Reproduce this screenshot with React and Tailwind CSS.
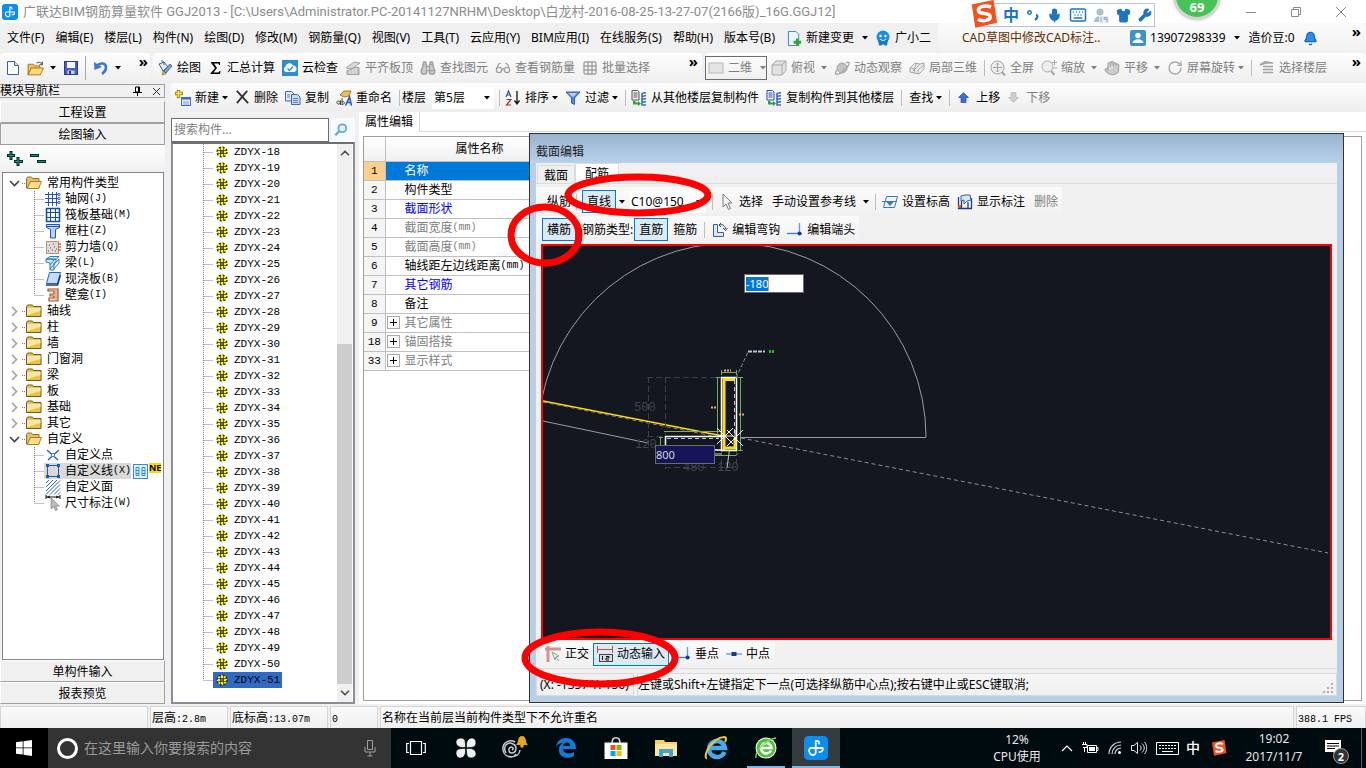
import React from 'react';
import {
    Bell, Binoculars, ChevronDown, ChevronUp, Glasses, Grid3x3, Hand, Keyboard, Mic,
    MousePointer2, RotateCw, Shirt, Wrench,
} from 'lucide-react';

const MONO = "font-['Liberation_Mono','Noto_Sans_CJK_SC',monospace]";

/* ---------- small building blocks ---------- */

const Svg = ({ size = 16, children, className = '' }) => (
    <svg width={size} height={size} viewBox="0 0 16 16" fill="none" className={`shrink-0 ${className}`} aria-hidden="true">
        {children}
    </svg>
);

const Caret = ({ className = '' }) => (
    <svg width="6" height="4" viewBox="0 0 6 4" className={`shrink-0 ${className}`} aria-hidden="true">
        <path d="M0 0h6L3 3.5z" fill="currentColor" />
    </svg>
);

const Sep = ({ className = '' }) => <span className={`h-4 w-px shrink-0 bg-[#bdbdbd] ${className}`} />;

const More = () => <span className="block text-[15px] leading-3 font-bold text-black">»</span>;

const Tool = ({ icon, label, muted, arrow, className = '' }) => (
    <button className={`flex shrink-0 items-center gap-1 whitespace-nowrap ${muted ? 'text-[#808080]' : 'text-black'} ${className}`}>
        {icon}
        {label}
        {arrow && <Caret className="-ml-px" />}
    </button>
);

const WideArrowTool = ({ icon, label }) => (
    <button className="flex shrink-0 items-center gap-1 whitespace-nowrap text-[#808080]">
        {icon}
        {label}
        <Caret className="ml-0.5" />
    </button>
);

/* ---------- icons ---------- */

const AppLogo = ({ size = 16 }) => (
    <Svg size={size}>
        <rect width="16" height="16" rx="3" fill="#0a8ff0" />
        <path d="M7.800 3.200v7.600c0 1.800-1.400 2.300-2.800 1.600C3.200 11.400 2.800 9.200 4.200 8h8.200c.5 1.600-.6 2.800-2.200 2.700M7.800 3.300c1.500-.4 2.500.4 2.200 1.700" stroke="#fff" strokeWidth="1.200" strokeLinecap="round" />
    </Svg>
);

const NewFile = () => (
    <Svg><path d="M2.500 1.500h7l4 4v9h-11z" fill="#fff" stroke="#3b5f94" /><path d="M9.500 1.500v4h4" fill="#dbe7f7" stroke="#3b5f94" /></Svg>
);
const OpenFile = () => (
    <Svg size={17}>
        <path d="M1 4h5l1 1.500h5V8H4L1 14z" fill="#f0c35a" stroke="#9a6a1c" strokeWidth=".8" />
        <path d="M1 14l3-6.500h11.500L12.500 14z" fill="#ffd978" stroke="#9a6a1c" strokeWidth=".8" />
        <path d="M9 3c2-1.500 4-1 5 1M14.500 1.500V4.500h-3" stroke="#55606e" />
    </Svg>
);
const SaveFile = () => (
    <Svg><rect x="1.500" y="1.500" width="13" height="13" fill="#4a5fc4" stroke="#2a3a90" /><path d="M4 2h8v6H4z" fill="#f4f6ff" /><path d="M4.500 10.500h7V14h-7z" fill="#c9cfe9" /><path d="M6 11h2v3H6z" fill="#2a3a90" /></Svg>
);
const Undo = () => (
    <Svg><path d="M4 6c3-4 9-3 9 1.500 0 3-2 5-4 6.500" stroke="#3d74d0" strokeWidth="2.600" /><path d="M1 2l.5 8L9 7z" fill="#3d74d0" /></Svg>
);
const Paint = () => (
    <Svg size={16}>
        <path d="M2 4l5-2 4 5-5 4z" fill="#dfeaf7" stroke="#3d5f90" /><path d="M4 1c2-1 3 1 3 4" stroke="#3d5f90" />
        <path d="M7 11l6-7 2 2-6 7z" fill="#7ea4d8" stroke="#34558a" strokeWidth=".8" /><path d="M6 11l3 3-4 1z" fill="#eab23b" stroke="#8a6420" strokeWidth=".6" />
    </Svg>
);
const Sigma = () => <Svg className="-mr-px"><path d="M3 2h9v3h-1l-.5-1.500H6L9 8l-3.500 4.500h5L11.500 11h1l-.5 3H2.500v-.8L7 8.200 3 2.800z" fill="#000" /></Svg>;
const CloudCheck = () => (
    <Svg><rect width="16" height="16" fill="#2a8fd0" /><path d="M4 12a3 3 0 0 1-.5-5.500A4 4 0 0 1 11 5.500 3.300 3.300 0 0 1 12 12z" fill="#fff" /><path d="M5.500 8.500l2 2 3.500-4" stroke="#2a8fd0" strokeWidth="1.400" /></Svg>
);
const AlignSlab = () => <Svg><path d="M1 8l8-6 6 1-8 6z" fill="#d8d8d8" stroke="#a5a5a5" /><path d="M2 14.500v-4h3v-1.500h3v-1.500h6v7z" fill="#c4c4c4" stroke="#a0a0a0" /><path d="M5 14v-4M8 14V9M11 14V8" stroke="#eee" /></Svg>;
const Box2D = () => <Svg><rect x="1" y="3" width="14" height="10" fill="#e4e4e4" stroke="#b8b8b8" /></Svg>;
const Cube = () => <Svg><path d="M1 5l4-4h10v9.500L11 15H1zM1 5h10v10M11 5l4-4" fill="#e2e2e2" stroke="#a8a8a8" /></Svg>;
const Planet = () => <Svg><circle cx="8" cy="8" r="5" fill="#c4c4c4" stroke="#a4a4a4" /><path d="M12 3c3-2 4 0 2 3-3 4-8 8-11 8.500-2 .2-2-2 0-4.500" stroke="#ababab" strokeWidth="1.400" /></Svg>;
const Cubes = () => <Svg><path d="M1 8l5-5 5 1 4-1v6l-5 5-5-1-4-1zM1 8l5 1 5-5M6 9l-1 4M8 3l-4 8M15 5l-6 5v4" fill="#eaeaea" stroke="#a8a8a8" /></Svg>;
const FullView = () => <Svg><circle cx="7.500" cy="7.500" r="6.500" fill="#efefef" stroke="#a4a4a4" /><path d="M12 12l3 3.500" stroke="#a4a4a4" strokeWidth="2" /><path d="M7.500 3v9M3 7.500h9M6 4.500l1.500-1.500L9 4.500M6 10.500l1.500 1.500L9 10.500" stroke="#a4a4a4" /></Svg>;
const ZoomView = () => <Svg><circle cx="6.500" cy="6.500" r="5.500" fill="#eee" stroke="#aaa" /><path d="M10 11l3.500 4" stroke="#aaa" strokeWidth="2" /><path d="M13.500 0v5M11 2.500h5M12 8h4" stroke="#aaa" /></Svg>;
const Floors = () => <Svg><path d="M1 5l5-3 8 1H7zM4 6.500h10M4 9.500h10M4 12.500h10" stroke="#a4a4a4" strokeWidth="1.700" /></Svg>;
const NewItem = () => (
    <Svg><path d="M3.500 0v8M0 3.500h8" stroke="#b08a10" strokeWidth="3.400" /><path d="M3.500 1v6M1 3.500h6" stroke="#ffe14a" strokeWidth="1.600" /><rect x="6.500" y="7.500" width="9" height="8" fill="#e8f0ff" stroke="#4a6fb5" /><path d="M6 8.500h10" stroke="#3c69c4" strokeWidth="2" /><path d="M8 12h6M8 14h6" stroke="#7a9bd8" /></Svg>
);
const Cross = () => <Svg size={15}><path d="M2 1l12 13M13 1L2 14" stroke="#333" strokeWidth="2" /></Svg>;
const Copy = () => (
    <Svg><path d="M.5 1.500h6l2.500 2.500v7H.5z" fill="#dfe9fa" stroke="#3f68b3" /><path d="M6.500 4.500h6l2.500 2.500v7.500H6.500z" fill="#c9dbf7" stroke="#3f68b3" /><path d="M2 5h3M2 7h3M8 8.500h5M8 10.500h5M8 12.500h5" stroke="#3f68b3" strokeWidth=".8" /></Svg>
);
const Rename = () => (
    <Svg>
        <path d="M4 5l4-4h7l-2 5-5 1z" fill="#eec04c" stroke="#8a6414" strokeWidth=".8" />
        <circle cx="2.500" cy="12.500" r="1.600" stroke="#444" /><path d="M4.500 10.500v4.500M6 8v7M6 12c3-2 3 3 0 2.500" stroke="#444" />
        <path d="M9.500 15.500L13.500 7l2 8.500M11 12.500h4" stroke="#2a58b8" strokeWidth="1.600" />
    </Svg>
);
const SortAZ = () => (
    <Svg>
        <path d="M1 7l2.500-6L6 7M2 5h3" stroke="#2b50b0" strokeWidth="1.200" /><path d="M1.500 9.500H6L1.500 15H6" stroke="#a02c2c" strokeWidth="1.200" />
        <path d="M12 1v12M9.500 10.500l2.500 3.500 2.500-3.500" stroke="#111" strokeWidth="1.300" />
    </Svg>
);
const Funnel = () => <Svg><path d="M1 2h14l-5.500 6v6.500l-3-1.500V8z" fill="#4f8ae0" stroke="#2d5fb5" /><path d="M3 3h9L8 7z" fill="#b7d3fa" /></Svg>;
const CopyFloors = ({ doc = '#555' }) => (
    <Svg>
        <path d="M1 .5h5.500L8 2v8H1z" fill="#eef2fa" stroke={doc} /><path d="M2.500 3h4M2.500 5h4M2.500 7h4" stroke={doc} />
        <path d="M11 3.500l4-1M11 6.500l4-1M11 9.500l4-1M11 12.500l4-1M11 3v12h4" stroke="#3a70c8" strokeWidth="1.600" />
        <path d="M2 11h2.500v1.500H7L7 11l3 2.500-3 2.500v-1.500H2z" fill="#2aa33a" />
    </Svg>
);
const UpArrow = ({ color = '#3a6fd8', edge = '#2450a8', down }) => (
    <Svg size={13} className={down ? 'rotate-180' : ''}><path d="M8 2l6 6h-3v6H5V8H2z" fill={color} stroke={edge} /></Svg>
);
const SogouS = ({ size = 16 }) => (
    <Svg size={size}>
        <path d="M1 2.500L13.500 0 15.500 13 3 15.800z" fill="#f4511e" />
        <path d="M12 4C8 2.500 4 4 5 6.500c1 2 6 .5 6.500 2.800.4 2.400-4 3.300-7 1.700" stroke="#fff" strokeWidth="2" />
    </Svg>
);

const Folder = ({ open }) => (
    <svg width="16" height="14" viewBox="0 0 16 14" className="shrink-0" aria-hidden="true">
        {open ? (
            <>
                <path d="M.5 2.500L1.500 1h4l1 1.500H13V12H.5z" fill="#e8bf5a" stroke="#8b7437" />
                <path d="M1 12.500L4.500 5.500h11L12.500 12.500z" fill="#ffdf8c" stroke="#a9812c" />
            </>
        ) : (
            <>
                <path d="M.5 2.500L1.500 1h5l1 1.500H15V12.500H.5z" fill="#f0bf4c" stroke="#6f5a20" />
                <path d="M1 4h13.500v3L1 11z" fill="#ffe7a4" />
            </>
        )}
    </svg>
);

/* dotted connector of a tree row */
const Branch = ({ last, width = 12 }) => (
    <svg width={width} height="16" className="shrink-0" aria-hidden="true">
        <path d={`M.5 0V${last ? 8 : 16}M.5 8.5H${width}`} stroke="#808080" strokeDasharray="1 1" fill="none" />
    </svg>
);

const ChildIcon = ({ kind }) => {
    switch (kind) {
        case 'grid':
            return <Svg><path d="M3.500 1v14M7.500 1v14M11.500 1v14M0 3.500h14M0 7.500h14M0 11.500h14" stroke="#2a52b8" /><path d="M13 2.500h2v2h-2zM13 6.500h2v2h-2zM13 10.500h2v2h-2z" stroke="#2a52b8" fill="#fff" strokeWidth=".8" /></Svg>;
        case 'raft':
            return <Svg><rect x="1.500" y="1.500" width="13" height="13" stroke="#1b4e94" strokeWidth="1.500" fill="#eaf2ff" /><rect x="5.500" y="5.500" width="5" height="5" fill="#fff" /><path d="M5.500 2v12M10.500 2v12M2 5.500h12M2 10.500h12" stroke="#1b4e94" /></Svg>;
        case 'column':
            return <Svg><path d="M1.500 1.500h13v3l-4 2v8.500h-5V6.500l-4-2z" fill="#b9d4fb" stroke="#1f57b8" /><path d="M1.500 3.500h13" stroke="#1f57b8" /></Svg>;
        case 'wall':
            return <Svg><rect x="1.500" y="2.500" width="12" height="12" fill="#dcdcdc" stroke="#c98a66" /><path d="M13 5h3M13 8h3M13 11h3" stroke="#e0622a" strokeWidth="1.400" /><path d="M3 12h1M5 9h1M7 11h1M9 8h1M10 12h1M4 6h1M8 5h1M11 10h1" stroke="#555" /></Svg>;
        case 'beam':
            return <Svg><path d="M1 4l4-2.500h9l-3 3zM1 4h10v3L9 8v7H5V8L1 7z" fill="#cfe6fb" stroke="#2a7fc4" /><path d="M5 14l9-10v4L9 14M5 10l4-5" stroke="#2a7fc4" /></Svg>;
        case 'slab':
            return <Svg><path d="M4.500 1.500h11l-3 11H1.500z" fill="#c5ddfb" stroke="#2a62c0" /><path d="M1 14h11.500l3-10" stroke="#143f8c" strokeWidth="1.600" /></Svg>;
        case 'niche':
            return <Svg><path d="M3 2h10v12H4v-3h5V9H5V7h4V4H3z" fill="#f7dcc6" stroke="#a2501c" strokeWidth="1.200" /><path d="M11 3v10" stroke="#d98750" /></Svg>;
        case 'point':
            return <Svg><path d="M2 3l11 10M14 3L3 13" stroke="#1f57b8" strokeWidth="1.200" /><rect x="6.500" y="6.500" width="3" height="3" fill="#fff" stroke="#2a8fe0" /></Svg>;
        case 'line':
            return <Svg><rect x="2.500" y="2.500" width="11" height="11" stroke="#1f57b8" /><path d="M1 1h3v3H1zM12 1h3v3h-3zM1 12h3v3H1zM12 12h3v3h-3z" fill="#1f57b8" /></Svg>;
        case 'face':
            return <Svg><path d="M1 4l3-3M1 8l7-7M1 12L12 1M1 15.500L15 1.500M5 15.500L15 5.500M9 15.500l6-6M13 15.500l2-2" stroke="#2a62c0" /></Svg>;
        default:
            return <Svg><path d="M1 0v4M15 0v4M1 2h14M5 1L2.500 2 5 3M11 1l2.500 1L11 3" stroke="#111" /><path d="M6 3v11l3-2.500 1.500 4 2-1-2-3.500h4z" fill="#bbb" stroke="#888" strokeWidth=".8" /></Svg>;
    }
};

const Gear = () => (
    <svg width="12" height="12" viewBox="0 0 12 12" className="shrink-0" aria-hidden="true">
        <circle cx="6" cy="6" r="5" fill="#f6f01c" stroke="#1c1c00" strokeWidth="1.200" strokeDasharray="2.200 1.700" />
        <path d="M4.500 1.500v9M7.500 1.500v9M1.500 4.500h9M1.500 7.500h9" stroke="#3a3800" strokeWidth=".7" />
        <rect x="5" y="5" width="2" height="2" fill="#fff" stroke="#222" strokeWidth=".8" />
    </svg>
);

/* ---------- data ---------- */

const MENUS = [
    '文件(F)', '编辑(E)', '楼层(L)', '构件(N)', '绘图(D)', '修改(M)', '钢筋量(Q)', '视图(V)',
    '工具(T)', '云应用(Y)', 'BIM应用(I)', '在线服务(S)', '帮助(H)', '版本号(B)',
];

const COMMON_TYPES = [
    { label: '轴网', hotkey: '(J)', kind: 'grid' },
    { label: '筏板基础', hotkey: '(M)', kind: 'raft' },
    { label: '框柱', hotkey: '(Z)', kind: 'column' },
    { label: '剪力墙', hotkey: '(Q)', kind: 'wall' },
    { label: '梁', hotkey: '(L)', kind: 'beam' },
    { label: '现浇板', hotkey: '(B)', kind: 'slab' },
    { label: '壁龛', hotkey: '(I)', kind: 'niche' },
];

const CLOSED_FOLDERS = ['轴线', '柱', '墙', '门窗洞', '梁', '板', '基础', '其它'];

const CUSTOM_TYPES = [
    { label: '自定义点', kind: 'point' },
    { label: '自定义线', hotkey: '(X)', kind: 'line', selected: true },
    { label: '自定义面', kind: 'face' },
    { label: '尺寸标注', hotkey: '(W)', kind: 'dim' },
];

const COMPONENTS = Array.from({ length: 34 }, (_, i) => `ZDYX-${18 + i}`);

const PROPS = [
    { no: 1, name: '名称', selected: true },
    { no: 2, name: '构件类型' },
    { no: 3, name: '截面形状', tone: 'text-[#0000ff]' },
    { no: 4, name: '截面宽度', unit: '(mm)', tone: 'text-[#808080]' },
    { no: 5, name: '截面高度', unit: '(mm)', tone: 'text-[#808080]' },
    { no: 6, name: '轴线距左边线距离', unit: '(mm)' },
    { no: 7, name: '其它钢筋', tone: 'text-[#0000ff]' },
    { no: 8, name: '备注' },
    { no: 9, name: '其它属性', tone: 'text-[#808080]', group: true },
    { no: 18, name: '锚固搭接', tone: 'text-[#808080]', group: true },
    { no: 33, name: '显示样式', tone: 'text-[#808080]', group: true },
];

/* ---------- top bars ---------- */

const TitleBar = () => (
    <header className="relative flex h-[23px] items-center bg-white pr-5 pl-0.5">
        <AppLogo />
        <h1 className="ml-[5px] flex-1 font-['Roboto','Noto_Sans_CJK_SC',sans-serif] text-[13px] whitespace-nowrap text-[#8c8c8c]">
            广联达BIM钢筋算量软件 GGJ2013 - [C:\Users\Administrator.PC-20141127NRHM\Desktop\白龙村-2016-08-25-13-27-07(2166版)_16G.GGJ12]
        </h1>
        <div className="flex items-center gap-[35px] text-[#8a8a8a]">
            <button aria-label="最小化"><svg width="10" height="10"><path d="M0 5.500h10" stroke="currentColor" /></svg></button>
            <button aria-label="还原"><svg width="10" height="10" fill="none"><path d="M.5 2.500h7v7h-7zM2.500 2V.5h7v7H8" stroke="currentColor" /></svg></button>
            <button aria-label="关闭"><svg width="10" height="10"><path d="M0 0l10 10M10 0L0 10" stroke="currentColor" /></svg></button>
        </div>
        {/* input method bar and speed ball float over the window */}
        <div className="absolute top-[3px] right-[211px] z-20 flex h-6 w-[176px] items-center justify-end gap-[7px] border border-[#b4c3d6] bg-white pr-0.5 text-[#1c74c4]">
            <span className="absolute -top-1 -left-2.5"><SogouS size={28} /></span>
            <span className="text-base leading-5 font-bold">中</span>
            <svg width="14" height="14" fill="none"><circle cx="3.500" cy="4.500" r="1.700" stroke="currentColor" strokeWidth="1.500" /><path d="M10 7c2 0 2 3-1 5" stroke="currentColor" strokeWidth="2.200" /></svg>
            <Mic size={15} strokeWidth={2.500} fill="currentColor" />
            <Keyboard size={18} />
            <svg width="15" height="15"><circle cx="6" cy="4" r="3.500" fill="#a9bdd3" /><path d="M0 14c0-8 12-8 12 0z" fill="#a9bdd3" /><rect x="5" y="8" width="10" height="7" fill="#e9eef4" /><path d="M7 9v5M10 9.500h3v5M10 9.500v2h3" stroke="#8aa2bd" fill="none" /></svg>
            <Shirt size={15} fill="currentColor" />
            <Wrench size={14} fill="currentColor" />
        </div>
        <div className="absolute -top-[28px] right-[145px] z-20 flex h-12 w-12 items-end justify-center rounded-full border-[3px] border-[#d4d4d4] bg-[#45c258] pb-[3px] shadow">
            <span className="text-[13px] leading-[14px] font-bold text-white">69</span>
        </div>
    </header>
);

const MenuBar = () => (
    <nav className="flex h-[30px] items-center bg-[#f0f0f0] pl-[7px]">
        <div className="flex items-center gap-[11px] whitespace-nowrap">
            {MENUS.map((label) => <button key={label}>{label}</button>)}
        </div>
        <button className="ml-3 flex items-center gap-1 whitespace-nowrap">
            <Svg size={15}><path d="M1.500.5h8l3 3v12h-11z" fill="#e9f5ff" stroke="#2a86c8" /><path d="M11 8v8M7 12h8" stroke="#3aa52a" strokeWidth="3" /></Svg>
            新建变更
            <Caret className="ml-1" />
        </button>
        <button className="ml-[7px] flex items-center gap-1 whitespace-nowrap">
            <Svg><circle cx="8" cy="7" r="6.500" fill="#1d8fe0" /><path d="M3 10h10l-1 5.500H9.500L8 14l-1.500 1.500H4z" fill="#1877c8" /><circle cx="5.500" cy="6" r="1.200" fill="#fff" /><circle cx="10.500" cy="6" r="1.200" fill="#fff" /><path d="M5 9c2 2 4 2 6 0" stroke="#fff" /></Svg>
            广小二
        </button>
        <div className="ml-[7px] flex h-full flex-1 items-center rounded bg-gradient-to-b from-[#fafafa] to-[#f1f1f1] whitespace-nowrap">
            <a href="#tip" className="ml-6 w-[168px] text-[#5f2f00]">CAD草图中修改CAD标注..</a>
            <button className="flex items-center gap-1">
                <Svg><rect width="16" height="16" rx="2" fill="#3d94c4" /><circle cx="8" cy="5.500" r="2.700" fill="#fff" /><path d="M2.500 13c.5-5 10.500-5 11 0z" fill="#fff" /></Svg>
                13907298339
                <Caret className="ml-1" />
            </button>
            <span className="ml-[9px]">造价豆:0</span>
            <Bell size={15} fill="#2b8cf5" stroke="#1567c0" className="ml-2" />
            <span className="mt-0.5 mr-[5px] ml-auto self-start"><More /></span>
        </div>
    </nav>
);

const MainToolbar = () => (
    <div className="flex h-[30px] items-stretch gap-[3px] bg-[#f0f0f0]">
        <div className="flex w-[150px] items-center rounded bg-gradient-to-b from-[#fdfdfd] to-[#eeeeee] pl-[5px]">
            <button aria-label="新建"><NewFile /></button>
            <button aria-label="打开" className="ml-[6px] flex items-center gap-[6px]"><OpenFile /><Caret /></button>
            <button aria-label="保存" className="ml-[7px]"><SaveFile /></button>
            <span className="ml-1.5 h-6 w-px bg-[#a8a8a8]" />
            <button aria-label="撤销" className="ml-[7px] flex items-center gap-1.5"><Undo /><Caret /></button>
            <span className="mt-0.5 mr-0.5 ml-auto self-start"><More /></span>
        </div>
        <div className="flex w-[549px] items-center gap-[7px] rounded bg-gradient-to-b from-[#fdfdfd] to-[#eeeeee] pl-1">
            <Tool icon={<Paint />} label="绘图" />
            <Tool icon={<Sigma />} label="汇总计算" />
            <Tool icon={<CloudCheck />} label="云检查" />
            <Tool icon={<AlignSlab />} label="平齐板顶" muted />
            <Tool icon={<Binoculars size={16} fill="#c8c8c8" stroke="#a0a0a0" />} label="查找图元" muted />
            <Tool icon={<Glasses size={16} stroke="#a0a0a0" />} label="查看钢筋量" muted />
            <Tool icon={<Grid3x3 size={16} stroke="#a0a0a0" />} label="批量选择" muted />
            <span className="mt-0.5 mr-1 ml-auto self-start"><More /></span>
        </div>
        <div className="flex flex-1 items-center gap-[7px] rounded bg-gradient-to-b from-[#fdfdfd] to-[#eeeeee]">
            <button className="-mr-[3px] flex h-6 w-[62px] items-center gap-1 border border-[#6e6e6e] pl-0.5 text-[#808080]">
                <Box2D />二维<Caret className="ml-1" />
            </button>
            <WideArrowTool icon={<Cube />} label="俯视" />
            <Tool icon={<Planet />} label="动态观察" muted />
            <Tool icon={<Cubes />} label="局部三维" muted />
            <Sep />
            <Tool icon={<FullView />} label="全屏" muted className="-ml-0.5" />
            <WideArrowTool icon={<ZoomView />} label="缩放" />
            <WideArrowTool icon={<Hand size={16} fill="#cccccc" stroke="#aaaaaa" />} label="平移" />
            <Tool icon={<RotateCw size={16} stroke="#a8a8a8" />} label="屏幕旋转" muted arrow />
            <Sep />
            <Tool icon={<Floors />} label="选择楼层" muted />
            <span className="mt-0.5 mr-[5px] ml-auto self-start"><More /></span>
        </div>
    </div>
);

const ComponentToolbar = () => (
    <div className="flex h-[29px] items-center gap-[7px] rounded bg-gradient-to-b from-[#fdfdfd] to-[#eeeeee] pl-1">
        <Tool icon={<NewItem />} label="新建" arrow />
        <Tool icon={<Cross />} label="删除" />
        <Tool icon={<Copy />} label="复制" />
        <Tool icon={<Rename />} label="重命名" />
        <label className="flex items-center gap-0.5 whitespace-nowrap">
            <Sep />
            <span>楼层</span>
            <span className="relative ml-1 flex items-center">
                <select className="h-[22px] w-[62px] appearance-none bg-white pl-0.5 text-xs" defaultValue="5">
                    <option value="5">第5层</option>
                </select>
                <Caret className="pointer-events-none absolute right-1" />
            </span>
        </label>
        <Sep className="-mx-0.5" />
        <Tool icon={<SortAZ />} label="排序" arrow />
        <Tool icon={<Funnel />} label="过滤" arrow />
        <Sep className="-mr-0.5" />
        <Tool icon={<CopyFloors />} label="从其他楼层复制构件" />
        <Tool icon={<CopyFloors doc="#2a50b0" />} label="复制构件到其他楼层" />
        <Sep />
        <Tool label="查找" arrow />
        <Sep />
        <Tool icon={<UpArrow />} label="上移" className="gap-1.5" />
        <Tool icon={<UpArrow down color="#cfcfcf" edge="#b8b8b8" />} label="下移" muted className="gap-1.5" />
    </div>
);

/* ---------- left navigation ---------- */

const NavButton = ({ children, active }) => (
    <button className={`h-[22px] w-full border border-b-[#a0a0a0] bg-[#f0f0f0] pt-px text-center leading-5 ${active ? 'border-[#a0a0a0]' : 'border-t-white border-r-[#a0a0a0] border-l-white'}`}>
        {children}
    </button>
);

const ParentRow = ({ label, open }) => (
    <li className="flex h-4 items-center pl-[6px] whitespace-nowrap">
        <svg width="11" height="11" fill="none" aria-hidden="true">
            <path d={open ? 'M1 3l4.500 4.500L10 3' : 'M3 1l4.500 4.500L3 10'} stroke={open ? '#404040' : '#a0a0a0'} strokeWidth="1.600" />
        </svg>
        <span className="mr-px ml-0.5 w-[3px] border-t border-dotted border-[#808080]" />
        <Folder open={open} />
        <span className="ml-[5px]">{label}</span>
    </li>
);

const ChildRow = ({ item, last }) => (
    <li className="flex h-4 items-center pl-[31px] whitespace-nowrap">
        <Branch last={last} width={10} />
        <span className={`flex h-4 items-center pl-px ${item.selected ? 'bg-[#d9d9d9]' : ''}`}>
            <ChildIcon kind={item.kind} />
            <span className="ml-1">{item.label}</span>
            {item.hotkey && <span className={`text-[10px] ${MONO}`}>{item.hotkey}</span>}
        </span>
        {item.selected && (
            <>
                <svg width="15" height="15" className="ml-0.5 shrink-0" aria-hidden="true"><rect x=".5" y=".5" width="14" height="14" fill="#e4f2ff" stroke="#2a8fe0" /><path d="M3 3.500h3v8H3zM9 3.500h3v8H9zM3 6.500h3M9 6.500h3M3 9.500h3M9 9.500h3" stroke="#2a8fe0" fill="none" /></svg>
                <span className="ml-px self-start bg-[#ffd800] text-[9px] leading-[10px] font-bold">NE</span>
            </>
        )}
    </li>
);

const NavPanel = () => (
    <aside className="flex w-[165px] shrink-0 flex-col bg-[#f0f0f0]">
        <div className="mt-px mb-[3px] flex h-[14px] items-center border border-l-0 border-[#a0a0a0] leading-3">
            <h2 className="flex-1 whitespace-nowrap">模块导航栏</h2>
            <svg width="9" height="10" fill="none"><path d="M2.500 1h4v5h-4zM0 6.500h9M4.500 7v3M5.500 1v5" stroke="#000" /></svg>
            <svg width="9" height="9" className="mr-[3px] ml-2.5"><path d="M1 1l7 7M8 1L1 8" stroke="#333" /></svg>
        </div>
        <NavButton>工程设置</NavButton>
        <NavButton active>绘图输入</NavButton>
        <div className="flex h-[27px] items-center gap-[7px] bg-gradient-to-b from-white to-[#f0f0f0] pl-[7px]">
            <button aria-label="全部展开"><svg width="16" height="16" fill="none"><path d="M4 0v9M0 4.500h8M11 6v9M7 10.500h9" stroke="#002a2a" strokeWidth="3" /><path d="M4 1v7M1 4.500h6M11 7v7M8 10.500h7" stroke="#0b9a8a" /></svg></button>
            <button aria-label="全部折叠"><svg width="16" height="16"><path d="M0 4.500h9M7 10.500h9" stroke="#002a2a" strokeWidth="3" /><path d="M1 4.500h7M8 10.500h7" stroke="#0b9a8a" /></svg></button>
        </div>
        <ul className="mr-px ml-0.5 flex-1 border border-[#828790] bg-white pt-0.5">
            <ParentRow label="常用构件类型" open />
            {COMMON_TYPES.map((item, i) => <ChildRow key={item.kind} item={item} last={i === COMMON_TYPES.length - 1} />)}
            {CLOSED_FOLDERS.map((label) => <ParentRow key={label} label={label} />)}
            <ParentRow label="自定义" open />
            {CUSTOM_TYPES.map((item, i) => <ChildRow key={item.kind} item={item} last={i === CUSTOM_TYPES.length - 1} />)}
        </ul>
        <NavButton>单构件输入</NavButton>
        <NavButton>报表预览</NavButton>
    </aside>
);

/* ---------- component list ---------- */

const ComponentList = () => (
    <section className="flex w-[184px] shrink-0 flex-col bg-[#f0f0f0]">
        <div className="mt-[5px] flex h-[25px] items-center">
            <input aria-label="搜索构件" placeholder="搜索构件..." className="h-6 w-[158px] border border-[#6e6e6e] bg-white pl-0.5 text-xs placeholder:text-[#808080]" />
            <button aria-label="搜索" className="ml-0.5 flex h-6 flex-1 items-center justify-center bg-[#f7fbff] pr-1">
                <Svg size={14}><circle cx="9.500" cy="6" r="4.500" stroke="#5aa7e6" strokeWidth="2" fill="#e6f4ff" /><path d="M6 9.500L1.500 14" stroke="#5aa7e6" strokeWidth="2.500" /></Svg>
            </button>
        </div>
        <div className="flex flex-1 border-2 border-[#8a8d93] border-t-[#6c6f75] bg-white">
            <ul className="flex-1">
                {COMPONENTS.map((name, i) => {
                    const current = i === COMPONENTS.length - 1;
                    return (
                        <li key={name} className="flex h-4 items-center pl-[30px]">
                            <Branch last={current} width={10} />
                            <span className={`flex h-4 items-center gap-1.5 pr-0.5 pl-[3px] ${current ? 'bg-[#316ac5]' : ''}`}>
                                <Gear />
                                <span className={`text-[11px] ${MONO}`}>{name}</span>
                            </span>
                        </li>
                    );
                })}
            </ul>
            <div className="mr-px flex w-[15px] flex-col items-center bg-[#f0f0f0]">
                <ChevronUp size={14} className="my-0.5" strokeWidth={3} stroke="#505050" />
                <div className="flex-[183]" />
                <div className="w-full flex-[343] bg-[#cdcdcd]" />
                <ChevronDown size={14} className="my-0.5" strokeWidth={3} stroke="#505050" />
            </div>
        </div>
    </section>
);

/* ---------- property table ---------- */

const PropertyPanel = () => (
    <section className="ml-1 flex flex-1 flex-col bg-white">
        <div className="flex h-[20px]">
            <h2 className="border-r border-[#d9d9d9] px-1.5 leading-5">属性编辑</h2>
            <div className="flex-1 border-b border-[#d9d9d9]" />
        </div>
        <div className="mt-1 mr-1 mb-[3px] ml-1 flex-1 border border-[#a0a0a0]">
            <table className="w-[420px] table-fixed border-collapse">
                <thead>
                    <tr className="h-6 bg-gradient-to-b from-white to-[#f0f0f0]">
                        <th className="w-[21px] border-r border-b border-[#c0c0c0]" />
                        <th className="w-[189px] border-r border-b border-[#c0c0c0] font-normal">属性名称</th>
                        <th className="border-b border-[#c0c0c0] font-normal">属性值</th>
                    </tr>
                </thead>
                <tbody>
                    {PROPS.map((row) => (
                        <tr key={row.no} className="h-[19px]">
                            <td className={`border-r border-b border-[#c0c0c0] text-center text-[11px] leading-[18px] ${MONO} ${row.selected ? 'bg-[#fbcf8c]' : 'bg-[#f5f5f5]'}`}>{row.no}</td>
                            <td className={`border-r border-b border-[#c0c0c0] leading-[18px] whitespace-nowrap ${row.selected ? 'bg-[#0078d7] text-white' : row.tone || 'text-black'}`}>
                                <span className="flex items-center">
                                    <span className="flex w-[19px] items-center pl-px">
                                        {row.group && (
                                            <svg width="13" height="13" fill="none" aria-hidden="true"><rect x=".5" y=".5" width="12" height="12" stroke="#a8a8a8" /><path d="M3 6.500h7M6.500 3v7" stroke="#000" /></svg>
                                        )}
                                    </span>
                                    {row.name}
                                    {row.unit && <span className={`text-[10px] ${MONO}`}>{row.unit}</span>}
                                </span>
                            </td>
                            <td className="border-b border-[#c0c0c0]" />
                        </tr>
                    ))}
                </tbody>
            </table>
        </div>
    </section>
);

/* ---------- section editor ---------- */

const SectionCanvas = () => (
    <div className="relative min-h-0 flex-1 overflow-hidden border-2 border-[#ff0000] bg-[#14171f]">
        <svg className="absolute inset-0 h-full w-full" fill="none" aria-label="截面图">
            <g transform="translate(-543 -246)">
                <path d="M538 437a194 194 0 0 1 388 0" stroke="#9a9ca2" />
                <path d="M740 437.500h186" stroke="#9a9ca2" />
                <path d="M741 438L1328 553" stroke="#8c8c8c" strokeDasharray="4 3" />
                <path d="M543 421l105 22" stroke="#9a9ca2" />
                <path d="M543 401l180 35" stroke="#ffd91e" strokeWidth="1.500" />
                <path d="M543 402l180 36" stroke="#8c8c5c" strokeDasharray="4 3" />
                <g stroke="#3a3f49" strokeDasharray="6 3">
                    <path d="M648.500 377v73M665.500 377v59M647 377.500h74M647 436.500h18M665 467.500h72M721.500 450v19M736.500 450v19M665.500 450v19" />
                </g>
                <g fill="#3f444e" fontSize="12" fontFamily="Liberation Mono">
                    <text x="634" y="411">500</text>
                    <text x="635" y="448">120</text>
                    <text x="683" y="471">480</text>
                    <text x="717" y="471">120</text>
                </g>
                <g stroke="#6fb05c">
                    <path d="M721 372.500h15M721.500 370v5M736.500 370v5M717.500 377v59M716 377.500h4M740.500 377v73M738 377.500h5M738 450.500h5M664 431.500h57M660.500 437v12M659 437.500h4M714 455.500h22l2-2" />
                </g>
                <path d="M665.500 436.500h56M665.500 436v14h57M721.500 377.500h15v73h-15z" stroke="#fff" strokeWidth="1.500" />
                <path d="M724 450V379.500h11M723 448h12v-10" stroke="#ffdc1c" strokeWidth="3" />
                <path d="M734.500 380v56M667 438.500h52" stroke="#a8cdf5" strokeDasharray="4 3" />
                <path d="M717 428l16 16M733 428l-16 16M717 436h16M727 430l16 16M743 430l-16 16M735 430v10" stroke="#f4f4f4" />
                <path d="M730 446l-3 22M714 454h8" stroke="#c4c4c4" />
                <path d="M736 378l12-26" stroke="#8c8c8c" strokeDasharray="4 2" />
                <path d="M748 351.500h17" stroke="#b4c4dc" strokeWidth="2" strokeDasharray="4 1" />
                <path d="M769 351.500h5" stroke="#16c416" strokeWidth="3" strokeDasharray="2 1" />
                <path d="M711 407.500h6M739 414.500h6M724 370.500h7" stroke="#e8a878" strokeWidth="2" strokeDasharray="2 1" />
            </g>
        </svg>
        <div className="absolute top-[28px] left-[201px] flex h-[19px] w-[60px] items-center border border-[#6a6a6a] bg-white px-px">
            <span className="border-r border-[#ff8a3c] bg-[#0078d7] text-[11px] leading-[14px] text-white">-180</span>
            <input aria-label="角度" className="h-4 w-6 min-w-0 flex-1" />
        </div>
        <input aria-label="长度" defaultValue="800" className="absolute top-[199px] left-[112px] h-[19px] w-[60px] border border-[#6a6a6a] bg-[#17145a] text-[11px] text-[#d4d4d4]" />
    </div>
);

const ActiveButton = ({ children, className = '' }) => (
    <button className={`flex h-[23px] shrink-0 items-center gap-1 border border-[#0078d7] bg-[#dceaf6] px-1 whitespace-nowrap ${className}`}>
        {children}
    </button>
);

const EndIcon = () => <Svg><path d="M0 11.500h15" stroke="#3f7fd0" strokeWidth="1.400" /><path d="M12.500 1v12" stroke="#5f9fe8" strokeWidth="1.400" /><circle cx="12.500" cy="11.500" r="2" fill="#1a3a8c" /></Svg>;

const SectionEditor = () => (
    <div role="dialog" aria-label="截面编辑" className="absolute top-[21px] right-[22px] bottom-px left-[358px] z-10 flex flex-col border border-[#2f3338] bg-[#b9cfe8] pb-1.5">
        <h2 className="h-[29px] bg-gradient-to-b from-[#99b4d1] to-[#b9d1ea] pt-1 pl-1.5 leading-[28px] text-[#1c1c1c]">截面编辑</h2>
        <div className="mx-1.5 flex min-h-0 flex-1 flex-col bg-[#f0f0f0]">
            <div role="tablist" className="flex h-[21px] items-end border-b border-[#dcdcdc] pl-px">
                <button role="tab" className="h-[18px] border border-b-0 border-[#dcdcdc] px-[6px] leading-[20px]">截面</button>
                <button role="tab" aria-selected="true" className="h-5 border border-b-0 border-[#dcdcdc] bg-white px-[9px] leading-5">配筋</button>
            </div>
            <div className="mt-[3px] flex h-[29px] w-[526px] items-center bg-gradient-to-b from-[#fbfbfb] to-[#f0f0f0] pl-[11px] whitespace-nowrap">
                <button>纵筋</button>
                <Sep className="mx-[5px]" />
                <ActiveButton>直线</ActiveButton>
                <Caret className="mx-[3px]" />
                <span className="relative ml-0.5 flex items-center">
                    <select aria-label="钢筋规格" defaultValue="a" className="h-[22px] w-[76px] appearance-none bg-white pl-px text-xs">
                        <option value="a">C10@150</option>
                    </select>
                    <Caret className="pointer-events-none absolute right-1" />
                </span>
                <Sep className="mx-[6px]" />
                <svg width="16" height="18" viewBox="0 0 16 18" className="mr-1" aria-hidden="true"><path d="M4 1v13l3-3 2.500 5.500 2-1L9 10h4z" fill="#f4f4f4" stroke="#7c7c7c" /></svg>
                <button>选择</button>
                <button className="ml-[9px] flex items-center gap-[7px]">手动设置参考线<Caret /></button>
                <Sep className="mx-[6px]" />
                <Tool icon={<Svg><path d="M4.500 2.500h11l-3 11h-11z" stroke="#2a7fc4" /><path d="M0 7.500h15M5 8h6l-3 3.500z" stroke="#2a7fc4" fill="#2a7fc4" /></Svg>} label="设置标高" />
                <Tool icon={<Svg><path d="M1.500 3v12M4.500 7v8M14.500 4v11M11 8v7M1 14.500h14" stroke="#1f3f80" strokeWidth="1.300" /><path d="M4 2l4-1h5l1 5-4 1-3 3V6L4 7z" fill="#d8e6f8" stroke="#3a5f9c" /><path d="M1 11h3v3H1z" fill="#e0562a" /></Svg>} label="显示标注" className="ml-[7px]" />
                <button className="ml-[9px] text-[#808080]">删除</button>
            </div>
            <div className="flex h-[27px] w-[323px] items-center bg-gradient-to-b from-[#fbfbfb] to-[#f0f0f0] pl-1.5 whitespace-nowrap">
                <ActiveButton>横筋</ActiveButton>
                <span className="ml-1.5">钢筋类型:</span>
                <ActiveButton className="ml-px">直筋</ActiveButton>
                <button className="ml-[5px]">箍筋</button>
                <Sep className="mx-[7px]" />
                <Tool icon={<Svg><path d="M1.500 2.500h4v8h6v4h-10z" fill="#dbe7f7" stroke="#3a5f9c" /><path d="M7 3c3-1 6 0 6.500 4M9 1L7 3l2 2M11 6l2.500 2.500L15.500 6" stroke="#24427c" /></Svg>} label="编辑弯钩" />
                <Tool icon={<EndIcon />} label="编辑端头" className="ml-[7px]" />
            </div>
            <div className="mx-[5px] mt-px flex min-h-0 flex-1 flex-col">
                <SectionCanvas />
            </div>
            <div className="flex h-[29px] items-center border-b border-[#dcdcdc]">
                <div className="ml-1 flex h-[27px] w-[235px] items-center bg-gradient-to-b from-[#fbfbfb] to-[#f0f0f0] pl-[5px] whitespace-nowrap">
                    <Tool icon={<Svg><path d="M0 3h16M3 0v16" stroke="#d89090" strokeWidth="3" /><path d="M7 6l7 4-3 1-1 3z" fill="#eee" stroke="#999" /><path d="M11 11l3 4" stroke="#999" /></Svg>} label="正交" />
                    <ActiveButton className="ml-1 px-[3px]">
                        <svg width="16" height="16" fill="none" aria-hidden="true"><path d="M.5 0v7M15.500 0v7M1 3.500h14" stroke="#c44a4a" /><rect x="2.500" y="8.500" width="13" height="7" fill="#ddd" stroke="#444" /><path d="M5.500 10v4M9 10.500h3v1.500H9v2h3" stroke="#111" /></svg>
                        动态输入
                    </ActiveButton>
                    <Tool icon={<EndIcon />} label="垂点" className="ml-1.5" />
                    <Tool icon={<Svg><path d="M0 8h16" stroke="#5f9fe8" strokeWidth="1.400" /><path d="M5.500 6h5v4h-5z" fill="#1a3a8c" /></Svg>} label="中点" className="ml-[7px]" />
                </div>
            </div>
            <div className="mt-1 flex h-[23px] gap-[3px] whitespace-nowrap">
                <span className="w-[98px] border border-[#d9d9d9] pl-[3px] leading-[21px]">(X: -1357 Y: 156)</span>
                <span className="relative flex-1 border border-[#d9d9d9] bg-gradient-to-b from-[#f6f6f6] to-[#f0f0f0] leading-[21px]">
                    左键或Shift+左键指定下一点(可选择纵筋中心点);按右键中止或ESC键取消;
                    <svg width="11" height="11" className="absolute right-0.5 bottom-px" aria-hidden="true"><path d="M8 1h2M4 5h2M8 5h2M0 9h2M4 9h2M8 9h2" stroke="#b0b0b0" strokeWidth="2" /></svg>
                </span>
            </div>
        </div>
        {/* hand-drawn red marks */}
        <svg className="pointer-events-none absolute inset-0 h-full w-full overflow-visible" fill="none" aria-hidden="true">
            <g stroke="#ff0000" strokeWidth="7">
                <ellipse cx="108" cy="61" rx="70" ry="18" />
                <ellipse cx="15" cy="101" rx="34" ry="28" />
                <ellipse cx="70" cy="524" rx="75" ry="26" />
            </g>
        </svg>
    </div>
);

/* ---------- bottom bars ---------- */

const StatusCell = ({ className = '', children }) => (
    <div className={`h-[22px] border border-b-0 border-[#d4d4d4] bg-gradient-to-b from-[#fafafa] to-[#efefef] pt-px pl-px leading-5 whitespace-nowrap ${className}`}>{children}</div>
);

const Num = ({ children }) => <span className={`text-[10px] ${MONO}`}>{children}</span>;

const StatusBar = () => (
    <footer className="flex h-6 items-end gap-0.5 bg-[#f0f0f0]">
        <StatusCell className="w-[148px]" />
        <StatusCell className="w-[78px]">层高<Num>:2.8m</Num></StatusCell>
        <StatusCell className="w-[98px]">底标高<Num>:13.07m</Num></StatusCell>
        <StatusCell className="w-12"><Num>0</Num></StatusCell>
        <StatusCell className="flex-1">名称在当前层当前构件类型下不允许重名</StatusCell>
        <StatusCell className="w-[70px]"><Num>388.1 FPS</Num></StatusCell>
    </footer>
);

const TaskIcon = ({ label, active, running, children }) => (
    <button aria-label={label} className={`relative flex h-10 shrink-0 items-center justify-center ${active ? 'mx-px w-12 bg-[#353c40]' : 'w-[50px]'}`}>
        {children}
        {(active || running) && <span className={`absolute bottom-0 h-0.5 bg-[#76b9ed] ${active ? 'inset-x-0' : 'inset-x-1.5'}`} />}
    </button>
);

const Taskbar = () => (
    <div className="flex h-10 items-center bg-[#000b0f] text-[#e8e8e8]">
        <button aria-label="开始" className="flex h-10 w-12 items-center justify-center bg-black">
            <svg width="16" height="16" fill="#fff"><path d="M0 2.200L6.700 1.300v6.200H0zM7.500 1.200L16 0v7.500H7.500zM0 8.300h6.700v6.300L0 13.700zM7.500 8.300H16V16l-8.500-1.200z" /></svg>
        </button>
        <label className="flex h-10 w-[343px] items-center bg-[#333333] px-[9px]">
            <span className="h-[21px] w-[21px] shrink-0 rounded-full border-[3px] border-white" />
            <input aria-label="搜索" placeholder="在这里输入你要搜索的内容" className="ml-1.5 flex-1 text-sm placeholder:text-[#9a9a9a]" />
            <svg width="12" height="18" fill="none" className="mr-1.5" aria-hidden="true"><path d="M3.500 1.500h5v9h-5zM1 8v5h10V8M6 13v4M3.500 17h5" stroke="#a0a0a0" /></svg>
        </label>
        <TaskIcon label="任务视图"><svg width="20" height="14" fill="none"><path d="M4.500.500h11v13h-11zM3 2.500H.7v9H3M17 2.500h2.300v9H17" stroke="#fff" strokeWidth="1.200" /></svg></TaskIcon>
        <TaskIcon label="浏览器">
            <svg width="22" height="22" viewBox="0 0 22 22">
                <g fill="#f0f0f0" stroke="#000b0f" strokeWidth=".8">
                    <path d="M11 10C6 12 0 9 1 4c1-3 6-4 8-2 2 2 1 5 2 8z" />
                    <path d="M12 11c-2-5 1-11 6-10 3 1 4 6 2 8-2 2-5 1-8 2z" />
                    <path d="M11 12c5-2 11 1 10 6-1 3-6 4-8 2-2-2-1-5-2-8z" />
                    <path d="M10 11c2 5-1 11-6 10-3-1-4-6-2-8 2-2 5-1 8-2z" />
                </g>
            </svg>
        </TaskIcon>
        <TaskIcon label="提醒">
            <svg width="28" height="26" fill="none" className="-mt-0.5"><path d="M18 16c-1 9-16 9-17 0C0 8 8 5 13 8M4 19c-4-7 2-12 7-9 5 2 3 9-1 9-4 0-4-5-1-6 2 0 3 2 1 3M14 20c-1 3-6 4-9 2" stroke="#c8c8c8" strokeWidth="1.500" /><path d="M14 11c3-2 1-9 6-9s3 7 6 9z" fill="#e8a912" /><circle cx="20" cy="12" r="1.800" fill="#e8a912" /></svg>
        </TaskIcon>
        <TaskIcon label="Edge"><svg width="22" height="22" viewBox="0 0 22 22"><path d="M1 10C2 3 7 1 11 1c6 0 10 4 10 11H8c0 4 6 6 11 3v4c-7 4-16 1-15-7 0-3 2-5 4-6-4 0-6 2-7 4zm7-1h7c0-5-7-4-7 0z" fill="#0f7ad8" /></svg></TaskIcon>
        <TaskIcon label="应用商店"><svg width="24" height="24" fill="none"><path d="M8 7c0-7 8-7 8 0" stroke="#ddd" strokeWidth="1.500" /><path d="M.5 6.500h23v16.500H.5z" fill="#fff" /><path d="M6.500 9h5v5h-5z" fill="#e8502a" /><path d="M12.500 9h5v5h-5z" fill="#7fba00" /><path d="M6.500 15h5v5h-5z" fill="#00a4ef" /><path d="M12.500 15h5v5h-5z" fill="#ffb900" /></svg></TaskIcon>
        <TaskIcon label="资源管理器"><svg width="22" height="20"><path d="M0 2h9l1 2h12v14H0z" fill="#f6cf68" /><path d="M0 6h22v12H0z" fill="#ffe49a" /><path d="M4 19v-8h14v8h-4v-4H8v4z" fill="#3aa4e0" /></svg></TaskIcon>
        <TaskIcon label="Internet Explorer"><svg width="24" height="24" viewBox="0 0 24 24" fill="none"><path d="M20.500 16a8 8 0 1 1 .5-4H7" stroke="#4aa8ec" strokeWidth="4.500" /><path d="M3 22.500C-2 20 8 2 20 1c3 0 2 3 1 5" stroke="#f3c22c" strokeWidth="2" /></svg></TaskIcon>
        <TaskIcon label="安全浏览器" running><svg width="22" height="22" viewBox="0 0 22 22" fill="none"><circle cx="11" cy="11" r="10.500" fill="#fff" /><circle cx="11" cy="11" r="9.500" fill="#4cc23a" /><path d="M16 13.500a5.200 5.200 0 1 1 .5-2.500H7" stroke="#fff" strokeWidth="2.600" /><path d="M1 21C0 14 10 3 21 1" stroke="#7be05a" strokeWidth="1.300" /></svg></TaskIcon>
        <TaskIcon label="广联达" active><AppLogo size={24} /></TaskIcon>
        <div className="flex-1" />
        <div className="w-[56px] text-center leading-[17px]">12%<br />CPU使用</div>
        <div className="ml-4 flex items-center gap-[9px]">
            <svg width="12" height="8" fill="none"><path d="M1 7l5-5 5 5" stroke="#fff" strokeWidth="1.200" /></svg>
            <svg width="17" height="13" fill="none"><path d="M5.500 3.500h9v7h-9zM15 5.500h1v3h-1M0 2.500h5v3H1M1.500 0v2M3.500 0v2M2.500 6v4" stroke="#fff" /><path d="M7 5h6v4H7z" fill="#fff" /></svg>
            <svg width="14" height="14" fill="none"><path d="M1 13A12 12 0 0 1 13 1M4 13a9 9 0 0 1 9-9M7 13a6 6 0 0 1 6-6" stroke="#d0d0d0" strokeWidth="1.200" /><circle cx="11.500" cy="11.500" r="1.500" fill="#fff" /></svg>
            <svg width="16" height="14" fill="none"><path d="M.5 4.500H3l3.500-3v11L3 9.500H.5zM9 4.500c1.500 1.500 1.500 3.500 0 5M11 2.500c3 3 3 6 0 9M13.500 1c3 4 3 8 0 12" stroke="#e8e8e8" /></svg>
            <svg width="23" height="13" fill="none"><path d="M.5.500h22v12H.5z" stroke="#fff" /><path d="M3 3.500h17M3 6.500h17" stroke="#fff" strokeDasharray="2 1" /><path d="M6 9.500h11" stroke="#fff" /></svg>
            <span className="-ml-0.5 text-sm font-medium text-white">中</span>
            <span className="ml-0.5"><SogouS /></span>
        </div>
        <div className="ml-4 w-[62px] text-center leading-[18px]">19:02<br />2017/11/7</div>
        <button aria-label="通知" className="relative mr-3 ml-5 flex h-10 w-6 items-center">
            <svg width="24" height="24" fill="none" aria-hidden="true"><path d="M0 4h16v12h-4v4l-4-4H0z" fill="#fff" /><path d="M2 7.500h12M2 10h12M2 12.500h8" stroke="#000" /></svg>
            <span className="absolute right-0 bottom-1 flex h-4 w-4 items-center justify-center rounded-full border border-[#999] bg-[#333] text-[11px] leading-none font-bold text-white">2</span>
        </button>
        <span className="mr-1 h-10 w-px bg-[#5a5a5a]" />
    </div>
);

const App = () => (
    <div className="flex min-h-screen flex-col bg-[#f0f0f0] font-['Noto_Sans','Noto_Sans_CJK_SC',sans-serif] text-xs text-black">
        <TitleBar />
        <MenuBar />
        <MainToolbar />
        <main className="flex min-h-0 flex-1">
            <NavPanel />
            <div className="ml-[6px] flex min-w-0 flex-1 flex-col">
                <ComponentToolbar />
                <div className="relative flex min-h-0 flex-1">
                    <ComponentList />
                    <PropertyPanel />
                    <SectionEditor />
                </div>
            </div>
        </main>
        <StatusBar />
        <Taskbar />
    </div>
);

export default App;
